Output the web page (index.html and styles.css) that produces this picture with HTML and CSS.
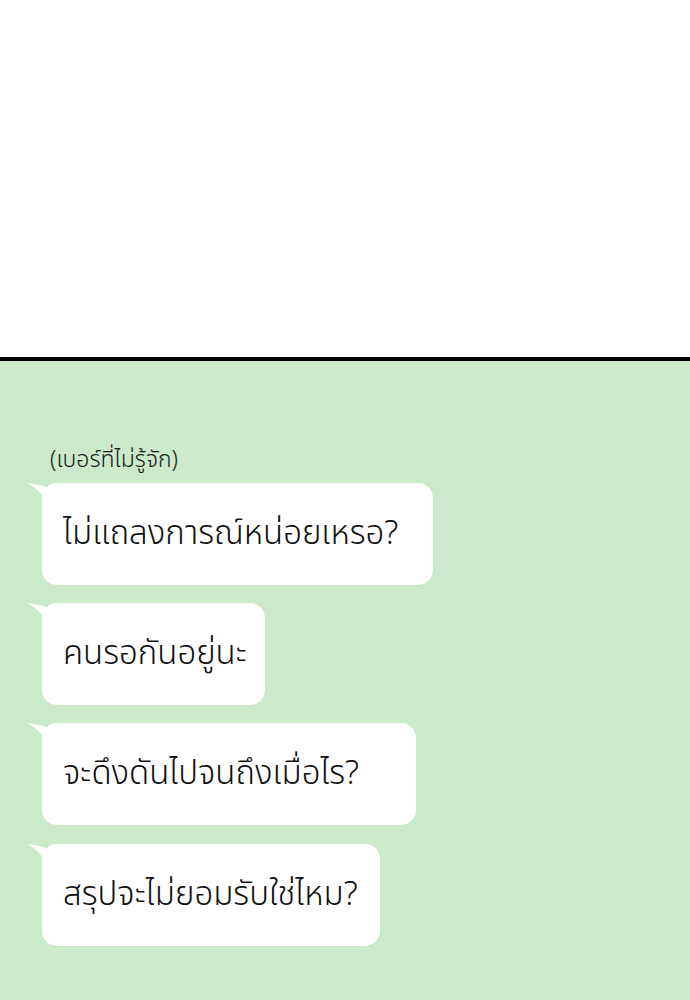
FILE: index.html
```html
<!DOCTYPE html>
<html lang="th">
<head>
  <meta charset="UTF-8" />
  <meta name="viewport" content="width=device-width, initial-scale=1.0" />
  <title>แชท</title>
  <link rel="stylesheet" href="styles.css">
</head>
<body>

  <div class="blank"></div>

  <div class="chat">
    <p class="sender">(เบอร์ที่ไม่รู้จัก)</p>

    <div class="bubble b1">
      <svg class="tail" width="22" height="26" viewBox="0 0 22 26"><path d="M0 0 Q12 1 22 5 L22 26 Q17 9 0 0 Z" fill="#fff"/></svg>
      ไม่แถลงการณ์หน่อยเหรอ?
    </div>

    <div class="bubble b2">
      <svg class="tail" width="22" height="26" viewBox="0 0 22 26"><path d="M0 0 Q12 1 22 5 L22 26 Q17 9 0 0 Z" fill="#fff"/></svg>
      คนรอกันอยู่นะ
    </div>

    <div class="bubble b3">
      <svg class="tail" width="22" height="26" viewBox="0 0 22 26"><path d="M0 0 Q12 1 22 5 L22 26 Q17 9 0 0 Z" fill="#fff"/></svg>
      จะดึงดันไปจนถึงเมื่อไร?
    </div>

    <div class="bubble b4">
      <svg class="tail" width="22" height="26" viewBox="0 0 22 26"><path d="M0 0 Q12 1 22 5 L22 26 Q17 9 0 0 Z" fill="#fff"/></svg>
      สรุปจะไม่ยอมรับใช่ไหม?
    </div>
  </div>

</body>
</html>
```

FILE: styles.css
```css
* {
  box-sizing: border-box;
  margin: 0;
  padding: 0;
}

body {
  font-family: 'Noto Sans Thai', 'Noto Sans', sans-serif;
  background-color: #cbe9cb;
  color: #111;
}

.blank {
  height: 361px;
  background: #fff;
  border-bottom: 4px solid #000;
}

.chat {
  display: flex;
  flex-direction: column;
  align-items: flex-start;
  gap: 18px;
  padding: 84px 0 60px 42px;
}

.sender {
  font-size: 23px;
  font-weight: 300;
  line-height: 30px;
  margin: 0 0 -10px 8px;
  color: #1a1a1a;
}

.bubble {
  position: relative;
  background: #fff;
  border-radius: 15px;
  height: 102px;
  display: flex;
  align-items: center;
  padding: 0 0 0 21px;
  font-size: 33px;
  font-weight: 300;
  white-space: nowrap;
}

.b1 { width: 391px; }
.b2 { width: 223px; }
.b3 { width: 374px; }
.b4 { width: 338px; margin-top: 1px; }

.tail {
  position: absolute;
  left: -15px;
  top: 0;
}
```
